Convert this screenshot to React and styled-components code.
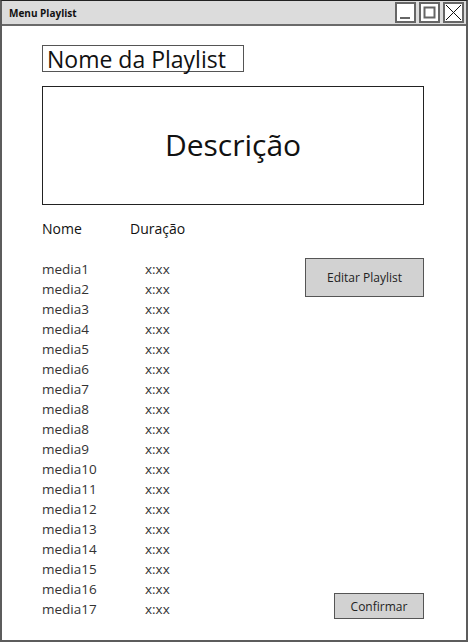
import React from "react";
import styled, { createGlobalStyle } from "styled-components";

const Global = createGlobalStyle`
  html, body { margin: 0; padding: 0; background: #fff; }
  body { font-family: "Open Sans", "DejaVu Sans", sans-serif; }
`;

const Window = styled.div`
  box-sizing: border-box;
  width: 468px;
  height: 642px;
  border: 2px solid #5c5c5c;
  border-top: 1px solid #222;
  display: flex;
  flex-direction: column;
`;

const TitleBar = styled.div`
  height: 24px;
  background: #dcdcdc;
  border-bottom: 2px solid #6a6a6a;
  display: flex;
  align-items: center;
  justify-content: space-between;
  padding: 0 2px 0 7px;
`;

const Title = styled.span`
  font-size: 10px;
  font-weight: 700;
  color: #111;
`;

const Controls = styled.div`
  display: flex;
  gap: 3px;
`;

const CtrlBtn = styled.div`
  box-sizing: border-box;
  width: 21px;
  height: 21px;
  border: 2px solid #666;
  background: #fff;
  display: flex;
  align-items: center;
  justify-content: center;
`;

const Content = styled.div`
  flex: 1;
  display: flex;
  flex-direction: column;
  padding: 19px 42px 21px 40px;
  color: #111;
`;

const NameBox = styled.div`
  box-sizing: border-box;
  align-self: flex-start;
  width: 202px;
  height: 27px;
  border: 1.5px solid #555;
  font-size: 23px;
  line-height: 22px;
  padding: 0 0 0 4px;
  white-space: nowrap;
  display: flex;
  align-items: center;
`;

const DescBox = styled.div`
  box-sizing: border-box;
  margin-top: 14px;
  height: 119px;
  border: 1.5px solid #222;
  display: flex;
  align-items: center;
  justify-content: center;
  font-size: 30px;
  padding-bottom: 2px;
`;

const Body = styled.div`
  flex: 1;
  margin-top: 14px;
  display: grid;
  grid-template-columns: 1fr 119px;
`;

const ListCol = styled.div`
  display: flex;
  flex-direction: column;
`;

const HeaderRow = styled.div`
  display: grid;
  grid-template-columns: 88px 1fr;
  font-size: 14px;
  color: #111;
  height: 20px;
  line-height: 20px;
  margin-bottom: 20px;
`;

const Row = styled.div`
  display: grid;
  grid-template-columns: 103px 1fr;
  height: 20px;
  line-height: 20px;
  font-size: 13.5px;
  color: #333;
`;

const SideCol = styled.div`
  display: flex;
  flex-direction: column;
  justify-content: space-between;
  align-items: flex-end;
  padding-top: 39px;
`;

const Button = styled.div`
  box-sizing: border-box;
  width: ${(p) => p.$w}px;
  height: ${(p) => p.$h}px;
  background: #d2d2d2;
  border: 1.5px solid #555;
  display: flex;
  align-items: center;
  justify-content: center;
  font-size: 12px;
  color: #222;
`;

const items = [
  "media1", "media2", "media3", "media4", "media5", "media6", "media7",
  "media8", "media8", "media9", "media10", "media11", "media12", "media13",
  "media14", "media15", "media16", "media17",
];

export default function App() {
  return (
    <>
      <Global />
      <Window>
        <TitleBar>
          <Title>Menu Playlist</Title>
          <Controls>
            <CtrlBtn>
              <svg width="13" height="13" viewBox="0 0 13 13">
                <line x1="1" y1="12" x2="11" y2="12" stroke="#666" strokeWidth="2" />
              </svg>
            </CtrlBtn>
            <CtrlBtn>
              <svg width="13" height="13" viewBox="0 0 13 13">
                <rect x="1.5" y="1.5" width="10" height="10" fill="none" stroke="#666" strokeWidth="2" />
              </svg>
            </CtrlBtn>
            <CtrlBtn>
              <svg width="17" height="17" viewBox="0 0 17 17">
                <path d="M1 1 L16 16 M16 1 L1 16" stroke="#111" strokeWidth="1" fill="none" />
              </svg>
            </CtrlBtn>
          </Controls>
        </TitleBar>
        <Content>
          <NameBox>Nome da Playlist</NameBox>
          <DescBox>Descrição</DescBox>
          <Body>
            <ListCol>
              <HeaderRow>
                <span>Nome</span>
                <span>Duração</span>
              </HeaderRow>
              {items.map((m, i) => (
                <Row key={i}>
                  <span>{m}</span>
                  <span>x:xx</span>
                </Row>
              ))}
            </ListCol>
            <SideCol>
              <Button $w={119} $h={39}>Editar Playlist</Button>
              <Button $w={90} $h={26}>Confirmar</Button>
            </SideCol>
          </Body>
        </Content>
      </Window>
    </>
  );
}
